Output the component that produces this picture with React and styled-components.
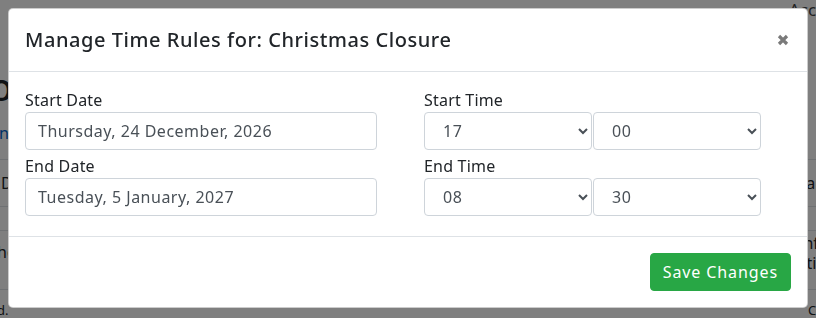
import React from "react";
import styled, { createGlobalStyle } from "styled-components";

const GlobalStyle = createGlobalStyle`
  html, body {
    margin: 0;
    padding: 0;
    background: #fff;
    overflow: hidden;
  }
  body {
    font-family: "Noto Sans", "DejaVu Sans", sans-serif;
    color: #212529;
  }
  * {
    box-sizing: border-box;
  }
`;

const FONT = `"Noto Sans", "DejaVu Sans", sans-serif`;

/* page behind the modal */
const Page = styled.div`
  width: 816px;
  height: 318px;
  overflow: hidden;
`;

const TopBar = styled.div`
  height: 20px;
  display: flex;
  align-items: flex-start;
  gap: 13px;
  padding: 0 0 0 776px;
  font-size: 17px;
  line-height: 20px;
  color: #444;
  white-space: nowrap;
`;

const Heading = styled.h1`
  margin: 46px 0 0 -38px;
  font-size: 38px;
  font-weight: 500;
  line-height: 40px;
  white-space: nowrap;
`;

const BackLink = styled.a`
  display: block;
  margin: 16px 0 0 -1px;
  color: #0062cc;
  font-size: 16px;
  line-height: 22px;
  text-decoration: none;
  white-space: nowrap;
`;

const Table = styled.div`
  margin-top: 15px;
`;

const Row = styled.div`
  display: flex;
  justify-content: space-between;
  align-items: ${(p) => (p.$top ? "flex-start" : "center")};
  height: ${(p) => p.$h}px;
  border-top: ${(p) => (p.$line ? "1px solid #dee2e6" : "none")};
  font-size: ${(p) => (p.$small ? "13px" : "16px")};
  white-space: nowrap;
`;

const Cell = styled.div`
  width: ${(p) => p.$w}px;
  margin-left: ${(p) => p.$ml || 0}px;
  padding-top: ${(p) => p.$pt || 0}px;
  line-height: 20px;
`;

const CellLine = styled.div`
  margin-left: ${(p) => p.$indent || 0}px;
`;

/* modal */
const Backdrop = styled.div`
  position: fixed;
  inset: 0;
  background: rgba(0, 0, 0, 0.5);
  display: flex;
  justify-content: center;
  align-items: flex-start;
  padding-top: 8px;
`;

const Modal = styled.div`
  width: 800px;
  background: #fff;
  border: 1px solid rgba(0, 0, 0, 0.2);
  border-radius: 5px;
  font-family: ${FONT};
`;

const Header = styled.div`
  display: flex;
  justify-content: space-between;
  align-items: center;
  padding: 16px;
  border-bottom: 1px solid #dee2e6;
`;

const Title = styled.h5`
  margin: 0;
  font-size: 20px;
  font-weight: 500;
  line-height: 30px;
  letter-spacing: 0.55px;
  color: #212529;
`;

const CloseButton = styled.button`
  border: 0;
  background: transparent;
  padding: 0;
  margin-right: 2px;
  width: 12px;
  height: 12px;
  display: flex;
  cursor: pointer;
`;

const Body = styled.div`
  padding: 16px;
  display: grid;
  grid-template-columns: 352px 337px;
  column-gap: 47px;
`;

const Group = styled.div`
  margin-bottom: 4px;
`;

const Label = styled.label`
  display: block;
  font-size: 16px;
  line-height: 24px;
  letter-spacing: 0.2px;
  color: #212529;
`;

const Input = styled.input`
  display: block;
  width: 100%;
  height: 38px;
  padding: 6px 12px;
  font-family: ${FONT};
  font-size: 16px;
  letter-spacing: 0.5px;
  color: #495057;
  background: #fff;
  border: 1px solid #ced4da;
  border-radius: 4px;
  outline: none;
`;

const SelectPair = styled.div`
  display: grid;
  grid-template-columns: 168px 168px;
  column-gap: 1px;
`;

const Select = styled.select`
  height: 38px;
  padding: 6px 10px 6px 14px;
  font-family: ${FONT};
  font-size: 16px;
  letter-spacing: 0.5px;
  color: #495057;
  background: #fff;
  border: 1px solid #ced4da;
  border-radius: 4px;
  outline: none;
`;

const Footer = styled.div`
  display: flex;
  justify-content: flex-end;
  padding: 16px;
  border-top: 1px solid #dee2e6;
`;

const SaveButton = styled.button`
  height: 38px;
  padding: 0 12px;
  font-family: ${FONT};
  font-size: 16px;
  letter-spacing: 0.9px;
  color: #fff;
  background: #28a745;
  border: 1px solid #28a745;
  border-radius: 4px;
  cursor: pointer;
`;

const hours = Array.from({ length: 24 }, (_, i) => String(i).padStart(2, "0"));
const minutes = ["00", "15", "30", "45"];

const TimeSelect = ({ value, options }) => (
  <Select defaultValue={value}>
    {options.map((o) => (
      <option key={o} value={o}>
        {o}
      </option>
    ))}
  </Select>
);

const CloseIcon = () => (
  <svg width="12" height="12" viewBox="0 0 12 12">
    <path d="M2 2 L10 10 M10 2 L2 10" stroke="#7a7a7a" strokeWidth="3.2" />
  </svg>
);

const ChartIcon = () => (
  <svg width="8" height="14" viewBox="0 0 8 14" style={{ marginTop: -2 }}>
    <rect x="0" y="0" width="2" height="14" fill="#333" />
    <rect x="2" y="12" width="6" height="2" fill="#333" />
    <rect x="3" y="6" width="2" height="8" fill="#333" />
    <rect x="6" y="4" width="2" height="10" fill="#333" />
  </svg>
);

const App = () => {
  return (
    <>
      <GlobalStyle />
      <Page>
        <TopBar>
          <ChartIcon />
          <span>Account</span>
        </TopBar>
        <Heading>Do</Heading>
        <BackLink>n</BackLink>
        <Table>
          <Row $h={47} $line>
            <Cell $w={40} $ml={1}>Date</Cell>
            <Cell $w={22}>Name</Cell>
          </Row>
          <Row $h={24} $line />
          <Row $h={59} $line $top>
            <Cell $w={40} $ml={-3} $pt={11}>
              hours
            </Cell>
            <Cell $w={31} $pt={2}>
              <CellLine $indent={13}>Info</CellLine>
              <CellLine $indent={-2}>Setting</CellLine>
            </Cell>
          </Row>
          <Row $h={40} $line $small>
            <Cell $w={40} $ml={-36}>Closed.</Cell>
            <Cell $w={8}>Clos</Cell>
          </Row>
        </Table>
      </Page>
      <Backdrop>
        <Modal>
          <Header>
            <Title>Manage Time Rules for: Christmas Closure</Title>
            <CloseButton aria-label="Close">
              <CloseIcon />
            </CloseButton>
          </Header>
          <Body>
            <div>
              <Group>
                <Label>Start Date</Label>
                <Input defaultValue="Thursday, 24 December, 2026" />
              </Group>
              <Group>
                <Label>End Date</Label>
                <Input defaultValue="Tuesday, 5 January, 2027" />
              </Group>
            </div>
            <div>
              <Group>
                <Label>Start Time</Label>
                <SelectPair>
                  <TimeSelect value="17" options={hours} />
                  <TimeSelect value="00" options={minutes} />
                </SelectPair>
              </Group>
              <Group>
                <Label>End Time</Label>
                <SelectPair>
                  <TimeSelect value="08" options={hours} />
                  <TimeSelect value="30" options={minutes} />
                </SelectPair>
              </Group>
            </div>
          </Body>
          <Footer>
            <SaveButton>Save Changes</SaveButton>
          </Footer>
        </Modal>
      </Backdrop>
    </>
  );
};

export default App;
